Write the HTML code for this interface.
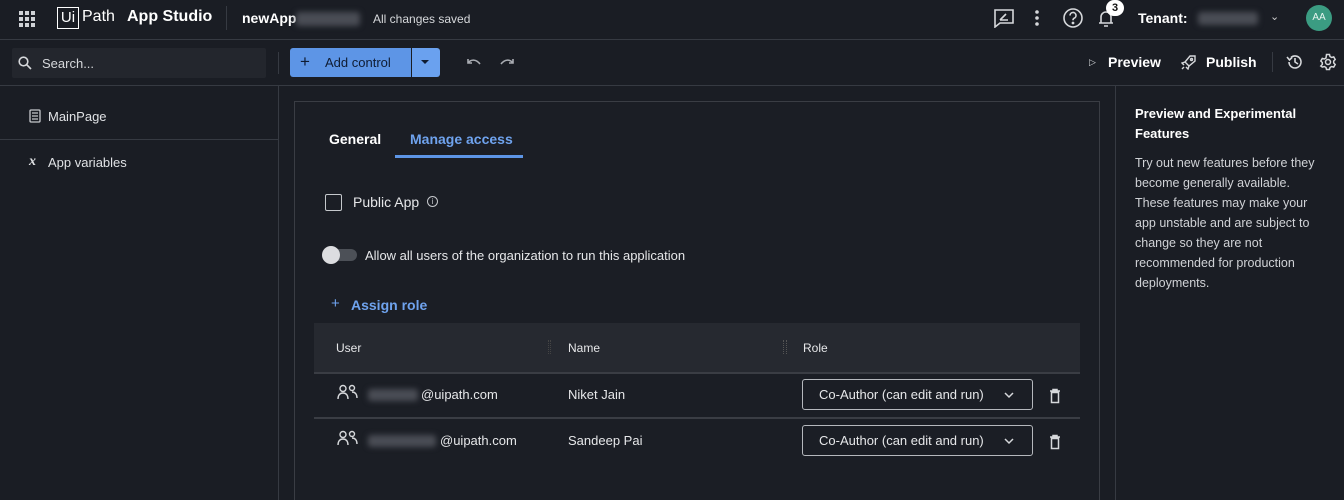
<!DOCTYPE html>
<html><head><meta charset="utf-8"><style>
*{box-sizing:border-box;margin:0;padding:0}
html,body{width:1344px;height:500px;overflow:hidden}
body{background:#1a1d24;color:#e6e7e9;font-family:"Liberation Sans",sans-serif;font-size:13px;position:relative}
.a{position:absolute;white-space:nowrap}
.line{position:absolute;background:#363a42}
.blur{position:absolute;background:#4a4d55;filter:blur(3px);border-radius:3px}
svg{position:absolute}
</style></head><body>
<svg style="left:18px;top:10px" width="18" height="18" viewBox="0 0 18 18" fill="#cfd2d6"><rect x="1" y="1" width="4" height="4"/><rect x="7" y="1" width="4" height="4"/><rect x="13" y="1" width="4" height="4"/><rect x="1" y="7" width="4" height="4"/><rect x="7" y="7" width="4" height="4"/><rect x="13" y="7" width="4" height="4"/><rect x="1" y="13" width="4" height="4"/><rect x="7" y="13" width="4" height="4"/><rect x="13" y="13" width="4" height="4"/></svg>
<div class="a" style="left:57px;top:7px;width:22px;height:22px;border:1.5px solid #fff;font-size:15px;color:#fff;line-height:19px;text-align:center">Ui</div>
<div class="a" style="left:82px;top:8px;font-size:16px;color:#fff">Path</div>
<div class="a" style="left:127px;top:8px;font-size:16px;font-weight:bold;color:#fff">App Studio</div>
<div class="line" style="left:226px;top:6px;width:1px;height:24px"></div>
<div class="a" style="left:242px;top:10px;font-size:14px;font-weight:bold;color:#fff">newApp</div>
<div class="blur" style="left:296px;top:12px;width:64px;height:14px"></div>
<div class="a" style="left:373px;top:12px;font-size:12px;color:#d6d8db">All changes saved</div>
<svg style="left:993px;top:8px" width="22" height="20" viewBox="0 0 22 20" fill="none" stroke="#d6d8db" stroke-width="1.6"><path d="M2 2h18v13H7l-5 4z"/><path d="M7 12l6-6M7 12h8"/></svg>
<svg style="left:1034px;top:9px" width="6" height="18" viewBox="0 0 6 18" fill="#d6d8db"><circle cx="3" cy="3" r="1.8"/><circle cx="3" cy="9" r="1.8"/><circle cx="3" cy="15" r="1.8"/></svg>
<svg style="left:1062px;top:7px" width="22" height="22" viewBox="0 0 22 22" fill="none" stroke="#d6d8db" stroke-width="1.6"><circle cx="11" cy="11" r="9"/><path d="M8 8.5a3 3 0 1 1 4 2.8c-.8.4-1 1-1 2"/><circle cx="11" cy="16" r=".6" fill="#d6d8db"/></svg>
<svg style="left:1097px;top:8px" width="18" height="20" viewBox="0 0 18 20" fill="none" stroke="#d6d8db" stroke-width="1.6"><path d="M4 15V9a5 5 0 0 1 10 0v6M2 15h14M7 18h4"/></svg>
<div class="a" style="left:1106px;top:0;width:18px;height:16px;border-radius:9px;background:#fff;color:#111;font-size:11px;font-weight:bold;text-align:center;line-height:16px">3</div>
<div class="a" style="left:1138px;top:10px;font-size:14px;font-weight:bold;color:#fff">Tenant:</div>
<div class="blur" style="left:1198px;top:12px;width:60px;height:13px"></div>
<div class="a" style="left:1270px;top:10px;font-size:11px;color:#ccc">⌄</div>
<div class="a" style="left:1306px;top:5px;width:26px;height:26px;border-radius:13px;background:#3b9c82;color:#e8f5f0;font-size:10px;text-align:center;line-height:26px">AA</div>
<div class="line" style="left:0;top:39px;width:1344px;height:1px"></div>
<div class="a" style="left:12px;top:48px;width:254px;height:30px;background:#23262d;border-radius:2px"></div>
<svg style="left:18px;top:56px" width="14" height="14" viewBox="0 0 14 14" fill="none" stroke="#d6d8db" stroke-width="1.6"><circle cx="5.5" cy="5.5" r="4.3"/><path d="M8.7 8.7L13 13"/></svg>
<div class="a" style="left:42px;top:56px;font-size:13px;color:#d6d8db">Search...</div>
<div class="line" style="left:278px;top:52px;width:1px;height:22px"></div>
<div class="a" style="left:290px;top:48px;width:121px;height:29px;background:#5d95e6;border-radius:3px 0 0 3px"></div>
<div class="a" style="left:412px;top:48px;width:28px;height:29px;background:#6aa1ef;border-radius:0 3px 3px 0"></div>
<div class="a" style="left:300px;top:52px;font-size:17px;color:#0f1c33">+</div>
<div class="a" style="left:325px;top:55px;font-size:13px;color:#0f1c33">Add control</div>
<div class="a" style="left:421px;top:60px;width:0;height:0;border-left:4px solid transparent;border-right:4px solid transparent;border-top:4px solid #0f1c33"></div>
<svg style="left:466px;top:57px" width="16" height="10" viewBox="0 0 16 10" fill="none" stroke="#a9acb2" stroke-width="1.6"><path d="M2 2v4h4M2 6c3-4 8-4 12 1"/></svg>
<svg style="left:499px;top:57px" width="16" height="10" viewBox="0 0 16 10" fill="none" stroke="#a9acb2" stroke-width="1.6"><path d="M14 2v4h-4M14 6c-3-4-8-4-12 1"/></svg>
<div class="a" style="left:1089px;top:57px;font-size:9px;color:#d6d8db">▷</div>
<div class="a" style="left:1108px;top:54px;font-size:14px;font-weight:bold;color:#fff">Preview</div>
<svg style="left:1181px;top:54px" width="16" height="16" viewBox="0 0 16 16" fill="none" stroke="#d6d8db" stroke-width="1.4"><path d="M6 10l-2-2 5-6h5v5l-6 5z M4 8L1 9l2 2 M8 12l-1 3-2-2 M3 13l-2 2"/><circle cx="10.5" cy="5.5" r="1"/></svg>
<div class="a" style="left:1206px;top:54px;font-size:14px;font-weight:bold;color:#fff">Publish</div>
<div class="line" style="left:1272px;top:52px;width:1px;height:20px"></div>
<svg style="left:1286px;top:53px" width="18" height="18" viewBox="0 0 18 18" fill="none" stroke="#d6d8db" stroke-width="1.6"><path d="M3 9a6 6 0 1 0 2-4.5M1 4l2.5 3L6 4.5M9 5v4l3 2"/></svg>
<svg style="left:1319px;top:53px" width="18" height="18" viewBox="0 0 18 18" fill="none" stroke="#d6d8db" stroke-width="1.5"><circle cx="9" cy="9" r="2.5"/><path d="M7.5 1.5h3l.5 2 1.7 1 2-.6 1.5 2.6-1.5 1.5v2l1.5 1.5-1.5 2.6-2-.6-1.7 1-.5 2h-3l-.5-2-1.7-1-2 .6L1.8 13l1.5-1.5v-2L1.8 8l1.5-2.6 2 .6 1.7-1z"/></svg>
<div class="line" style="left:0;top:85px;width:1344px;height:1px"></div>
<div class="line" style="left:278px;top:86px;width:1px;height:414px"></div>
<div class="line" style="left:0;top:139px;width:278px;height:1px"></div>
<svg style="left:29px;top:109px" width="12" height="14" viewBox="0 0 12 14" fill="none" stroke="#c5c8cc" stroke-width="1.3"><rect x="1" y="1" width="10" height="12" rx="1"/><path d="M3 4h6M3 7h6M3 10h6"/></svg>
<div class="a" style="left:48px;top:109px;font-size:13px;color:#e0e2e5">MainPage</div>
<div class="a" style="left:29px;top:154px;font-size:14px;font-style:italic;font-weight:bold;font-family:'Liberation Serif',serif;color:#e0e2e5">x</div>
<div class="a" style="left:48px;top:155px;font-size:13px;color:#e0e2e5">App variables</div>
<div class="line" style="left:1115px;top:86px;width:1px;height:414px"></div>
<div class="a" style="left:1135px;top:104px;font-size:13px;font-weight:bold;color:#fff;line-height:20px">Preview and Experimental<br>Features</div>
<div class="a" style="left:1135px;top:153px;font-size:12.5px;color:#d0d2d6;line-height:20px">Try out new features before they<br>become generally available.<br>These features may make your<br>app unstable and are subject to<br>change so they are not<br>recommended for production<br>deployments.</div>
<div class="a" style="left:294px;top:101px;width:806px;height:420px;border:1px solid #3a3d44;background:#1b1e25"></div>
<div class="a" style="left:329px;top:131px;font-size:14px;font-weight:bold;color:#fff">General</div>
<div class="a" style="left:410px;top:131px;font-size:14px;font-weight:bold;color:#6fa3ee">Manage access</div>
<div class="a" style="left:395px;top:155px;width:128px;height:3px;background:#5d95e6"></div>
<div class="a" style="left:325px;top:194px;width:17px;height:17px;border:1.5px solid #c5c8cc;border-radius:2px"></div>
<div class="a" style="left:353px;top:194px;font-size:14px;color:#e6e7e9">Public App</div>
<div class="a" style="left:427px;top:196px;width:11px;height:11px;border:1.2px solid #c5c8cc;border-radius:6px;font-size:8px;text-align:center;line-height:9px;color:#c5c8cc">i</div>
<div class="a" style="left:325px;top:249px;width:32px;height:12px;border-radius:6px;background:#4c5057"></div>
<div class="a" style="left:322px;top:246px;width:18px;height:18px;border-radius:9px;background:#dcdde0"></div>
<div class="a" style="left:365px;top:248px;font-size:13px;color:#e6e7e9">Allow all users of the organization to run this application</div>
<div class="a" style="left:331px;top:295px;font-size:15px;color:#6fa3ee">+</div>
<div class="a" style="left:351px;top:297px;font-size:14px;font-weight:bold;color:#6fa3ee">Assign role</div>
<div class="a" style="left:314px;top:323px;width:766px;height:49px;background:#262930"></div>
<div class="a" style="left:336px;top:341px;font-size:12px;color:#e6e7e9">User</div>
<div class="a" style="left:568px;top:341px;font-size:12px;color:#e6e7e9">Name</div>
<div class="a" style="left:803px;top:341px;font-size:12px;color:#e6e7e9">Role</div>
<div class="a" style="left:548px;top:340px;width:3px;height:14px;border-left:1px dotted #444;border-right:1px dotted #444"></div>
<div class="a" style="left:783px;top:340px;width:4px;height:14px;border-left:1.5px dotted #555;border-right:1.5px dotted #555"></div>
<div class="line" style="left:314px;top:372px;width:766px;height:2px;background:#3a3d44"></div>
<div class="line" style="left:314px;top:417px;width:766px;height:2px;background:#3a3d44"></div>
<svg style="left:337px;top:384px" width="22" height="16" viewBox="0 0 22 16" fill="none" stroke="#d6d8db" stroke-width="1.4"><circle cx="6" cy="4.5" r="3"/><path d="M1 15c0-4 2-6 5-6s5 2 5 6"/><circle cx="15" cy="4" r="2.5"/><path d="M15 8c3 0 5 2 5 6"/></svg>
<svg style="left:337px;top:430px" width="22" height="16" viewBox="0 0 22 16" fill="none" stroke="#d6d8db" stroke-width="1.4"><circle cx="6" cy="4.5" r="3"/><path d="M1 15c0-4 2-6 5-6s5 2 5 6"/><circle cx="15" cy="4" r="2.5"/><path d="M15 8c3 0 5 2 5 6"/></svg>
<div class="blur" style="left:368px;top:389px;width:50px;height:12px"></div>
<div class="a" style="left:421px;top:387px;font-size:13px;color:#e6e7e9">@uipath.com</div>
<div class="blur" style="left:368px;top:435px;width:68px;height:12px"></div>
<div class="a" style="left:440px;top:433px;font-size:13px;color:#e6e7e9">@uipath.com</div>
<div class="a" style="left:568px;top:387px;font-size:13px;color:#e6e7e9">Niket Jain</div>
<div class="a" style="left:568px;top:433px;font-size:13px;color:#e6e7e9">Sandeep Pai</div>
<div class="a" style="left:802px;top:379px;width:231px;height:31px;border:1px solid #b5b8bd;border-radius:3px"></div>
<div class="a" style="left:819px;top:387px;font-size:13px;color:#e6e7e9">Co-Author (can edit and run)</div>
<div class="a" style="left:802px;top:425px;width:231px;height:31px;border:1px solid #b5b8bd;border-radius:3px"></div>
<div class="a" style="left:819px;top:433px;font-size:13px;color:#e6e7e9">Co-Author (can edit and run)</div>
<svg style="left:1003px;top:391px" width="12" height="8" viewBox="0 0 12 8" fill="none" stroke="#d6d8db" stroke-width="1.5"><path d="M2 2l4 4 4-4"/></svg>
<svg style="left:1003px;top:437px" width="12" height="8" viewBox="0 0 12 8" fill="none" stroke="#d6d8db" stroke-width="1.5"><path d="M2 2l4 4 4-4"/></svg>
<svg style="left:1049px;top:388px" width="12" height="16" viewBox="0 0 12 16" fill="none" stroke="#d6d8db" stroke-width="1.5"><path d="M1 3h10M4 3V1.5h4V3M2.5 4.5h7V14.5h-7z"/></svg>
<svg style="left:1049px;top:434px" width="12" height="16" viewBox="0 0 12 16" fill="none" stroke="#d6d8db" stroke-width="1.5"><path d="M1 3h10M4 3V1.5h4V3M2.5 4.5h7V14.5h-7z"/></svg>
</body></html>
